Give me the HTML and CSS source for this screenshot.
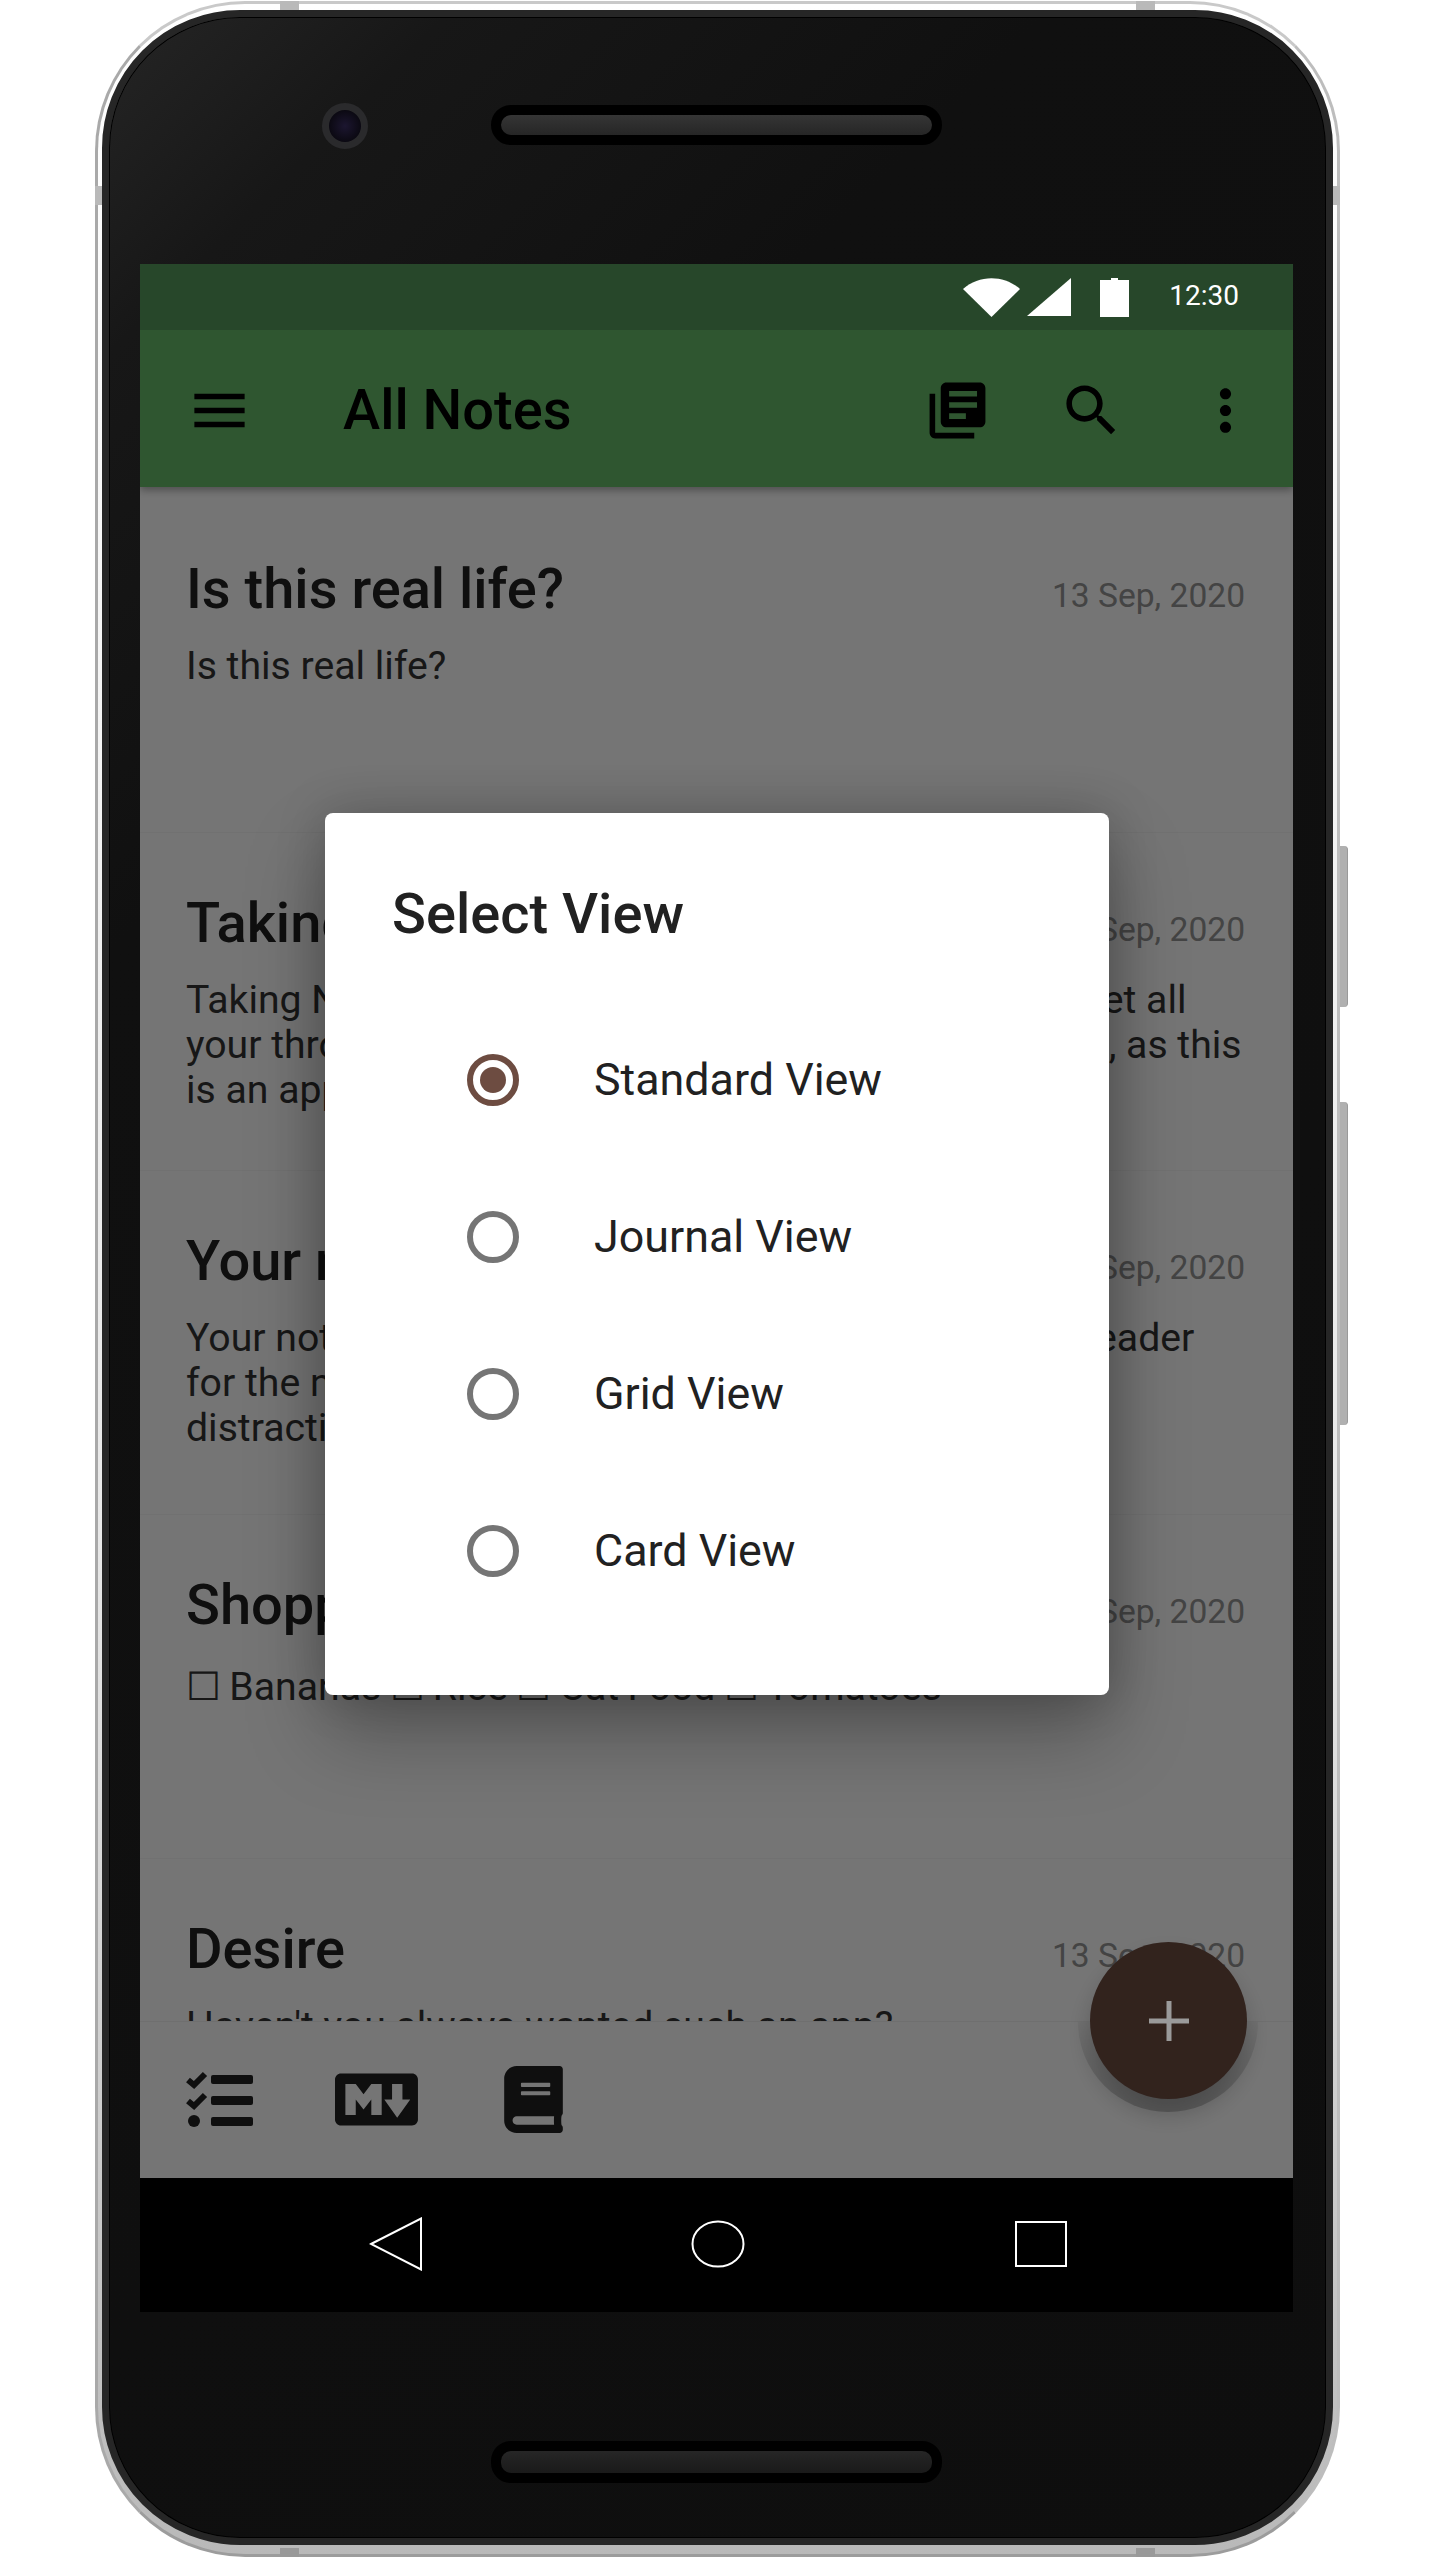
FILE: index.html
```html
<!DOCTYPE html>
<html lang="en">
<head>
    <meta charset="UTF-8">
    <meta name="viewport" content="width=device-width, initial-scale=1.0">
    <title>All Notes</title>
    <link rel="stylesheet" href="styles.css">
</head>
<body>
    <div class="phone">
        <span class="band band-top-left"></span>
        <span class="band band-top-right"></span>
        <span class="band band-side-left"></span>
        <span class="band band-side-right"></span>
        <span class="band band-bottom-left"></span>
        <span class="band band-bottom-right"></span>
        <span class="side-key key-power"></span>
        <span class="side-key key-volume"></span>

        <div class="face">
            <div class="bezel bezel-top">
                <span class="camera"></span>
                <span class="speaker"></span>
            </div>

            <div class="screen">
                <div class="app">
                    <!-- sits above the scrim, the system bar is not dimmed -->
                    <div class="status-bar">
                        <svg class="wifi" viewBox="0 0 57 39"><path d="M0 11C16 -3.500 41 -3.500 57 11L28.500 39Z" /></svg>
                        <svg class="signal" viewBox="0 0 44 38"><path d="M44 0V38H0Z" /></svg>
                        <svg class="battery" viewBox="0 0 29 39"><path d="M7 2H11V0H18V2H22H29V39H0V2Z" /></svg>
                        <span class="clock">12:30</span>
                    </div>

                    <div class="app-bar">
                        <svg class="icon" viewBox="0 0 24 24"><path d="M3 18h18v-2H3v2zm0-5h18v-2H3v2zm0-7v2h18V6H3z" /></svg>
                        <h1 class="app-title">All Notes</h1>
                        <svg class="icon" viewBox="0 0 24 24"><path d="M4 6H2v14c0 1.100.9 2 2 2h14v-2H4V6zm16-4H8c-1.100 0-2 .9-2 2v12c0 1.100.9 2 2 2h12c1.100 0 2-.9 2-2V4c0-1.100-.9-2-2-2zm-1 9H9V9h10v2zm-4 4H9v-2h6v2zm4-8H9V5h10v2z" /></svg>
                        <svg class="icon" viewBox="0 0 24 24"><path d="M15.500 14h-.79l-.28-.27C15.410 12.590 16 11.110 16 9.500 16 5.910 13.090 3 9.500 3S3 5.910 3 9.500 5.910 16 9.500 16c1.610 0 3.090-.59 4.230-1.570l.27.28v.79l5 4.990L20.490 19l-4.990-5zm-6 0C7.010 14 5 11.990 5 9.500S7.010 5 9.500 5 14 7.010 14 9.500 11.990 14 9.500 14z" /></svg>
                        <svg class="icon" viewBox="0 0 24 24"><path d="M12 8c1.100 0 2-.9 2-2s-.9-2-2-2-2 .9-2 2 .9 2 2 2zm0 2c-1.100 0-2 .9-2 2s.9 2 2 2 2-.9 2-2-.9-2-2-2zm0 6c-1.100 0-2 .9-2 2s.9 2 2 2 2-.9 2-2-.9-2-2-2z" /></svg>
                    </div>

                    <div class="notes">
                        <div class="note note-first">
                            <div class="note-head">
                                <h2 class="note-title">Is this real life?</h2>
                                <span class="note-date">13 Sep, 2020</span>
                            </div>
                            <p class="note-body">Is this real life?</p>
                        </div>
                        <div class="note note-second">
                            <div class="note-head">
                                <h2 class="note-title">Taking Notes</h2>
                                <span class="note-date">13 Sep, 2020</span>
                            </div>
                            <p class="note-body">Taking Notes is a pretty simple thing to do, you just get all<br>your thrown thoughts down right here in this nice app, as this<br>is an app built for that.</p>
                        </div>
                        <div class="note">
                            <div class="note-head">
                                <h2 class="note-title">Your notes</h2>
                                <span class="note-date">13 Sep, 2020</span>
                            </div>
                            <p class="note-body">Your notes are always with you here in the simplest reader<br>for the notes you take, without any<br>distractions.</p>
                        </div>
                        <div class="note">
                            <div class="note-head">
                                <h2 class="note-title">Shopping List</h2>
                                <span class="note-date">13 Sep, 2020</span>
                            </div>
                            <p class="note-body note-body-checks">☐ Bananas ☐ Rice ☐ Cat Food ☐ Tomatoes</p>
                        </div>
                        <div class="note">
                            <div class="note-head">
                                <h2 class="note-title">Desire</h2>
                                <span class="note-date">13 Sep, 2020</span>
                            </div>
                            <p class="note-body">Haven't you always wanted such an app?</p>
                        </div>
                    </div>

                    <div class="bottom-bar">
                        <svg class="tool-checks" viewBox="0 0 67 57">
                            <path class="check" d="M2 9L8 14L19 3M2 30L8 35L19 24" />
                            <circle cx="8" cy="50" r="6" />
                            <rect x="25" y="4" width="42" height="9" rx="2" />
                            <rect x="25" y="25" width="42" height="9" rx="2" />
                            <rect x="25" y="46" width="42" height="9" rx="2" />
                        </svg>
                        <svg class="tool-markdown" viewBox="0 3 16 10"><path d="M14.850 3H1.150C.52 3 0 3.520 0 4.150v7.690C0 12.480.52 13 1.150 13h13.690c.64 0 1.150-.52 1.150-1.150v-7.700C16 3.520 15.480 3 14.850 3zM9 11H7V8L5.500 9.920 4 8v3H2V5h2l1.500 2L7 5h2v6zm2.990.5L9.500 8H11V5h2v3h1.500l-2.510 3.500z" /></svg>
                        <svg class="tool-book" viewBox="0 0 448 512"><path d="M448 360V24c0-13.300-10.700-24-24-24H96C43 0 0 43 0 96v320c0 53 43 96 96 96h328c13.300 0 24-10.700 24-24v-16c0-7.500-3.500-14.300-8.900-18.700-4.200-15.400-4.200-59.300 0-74.700 5.400-4.300 8.900-11.100 8.900-18.600zM128 134c0-3.300 2.700-6 6-6h212c3.300 0 6 2.700 6 6v20c0 3.300-2.700 6-6 6H134c-3.300 0-6-2.700-6-6v-20zm0 64c0-3.300 2.700-6 6-6h212c3.300 0 6 2.700 6 6v20c0 3.300-2.700 6-6 6H134c-3.300 0-6-2.700-6-6v-20zm253.400 250H96c-17.700 0-32-14.300-32-32 0-17.600 14.400-32 32-32h285.400c-1.900 17.100-1.900 46.900 0 64z" /></svg>
                    </div>

                    <button class="fab"><svg viewBox="0 0 40 40"><path d="M17.500 0H22.500V17.500H40V22.500H22.500V40H17.500V22.500H0V17.500H17.500Z" /></svg></button>

                    <div class="scrim"></div>

                    <div class="dialog">
                        <h2 class="dialog-title">Select View</h2>
                        <div class="radio-row"><span class="radio radio-on"></span><span class="radio-label">Standard View</span></div>
                        <div class="radio-row"><span class="radio"></span><span class="radio-label">Journal View</span></div>
                        <div class="radio-row"><span class="radio"></span><span class="radio-label">Grid View</span></div>
                        <div class="radio-row"><span class="radio"></span><span class="radio-label">Card View</span></div>
                    </div>
                </div>

                <div class="nav-bar">
                    <svg class="nav-back" viewBox="0 0 54 54"><path d="M2 27L52 1.500V52.500Z" /></svg>
                    <svg class="nav-home" viewBox="0 0 54 48"><ellipse cx="27" cy="24" rx="25.500" ry="22.500" /></svg>
                    <svg class="nav-recent" viewBox="0 0 52 46"><rect x="1" y="1" width="50" height="44" /></svg>
                </div>
            </div>

            <div class="bezel bezel-bottom">
                <span class="speaker speaker-low"></span>
            </div>
        </div>
    </div>
</body>
</html>
```

FILE: styles.css
```css
* {
    box-sizing: border-box;
}
html, body {
    margin: 0;
    background-color: #fff;
}
body {
    width: 1440px;
    height: 2560px;
    padding: 1px 0 0 95px;
    font-family: Roboto, "Liberation Sans", sans-serif;
    overflow: hidden;
}
h1, h2, p {
    margin: 0;
}

/* Device frame */
.phone {
    position: relative;
    width: 1245px;
    height: 2556px;
    padding: 6px 4px 9px 4px;
    border: 3px solid #c9c9c9;
    border-bottom-color: #9c9c9c;
    border-left-color: #a9a9a9;
    border-right-color: #bdbdbd;
    border-radius: 150px;
    background: linear-gradient(180deg, #fff 0%, #e8e8e8 60%, #b9b9b9 100%);
}
.band {
    position: absolute;
    background-color: #b9b9b9;
}
.band-top-left, .band-bottom-left {
    left: 182px;
    width: 19px;
    height: 9px;
}
.band-top-right, .band-bottom-right {
    right: 182px;
    width: 19px;
    height: 9px;
}
.band-top-left, .band-top-right {
    top: -3px;
}
.band-bottom-left, .band-bottom-right {
    bottom: -3px;
    background-color: #999;
}
.band-side-left, .band-side-right {
    top: 182px;
    width: 7px;
    height: 19px;
}
.band-side-left {
    left: -3px;
}
.band-side-right {
    right: -3px;
}
.side-key {
    position: absolute;
    right: -11px;
    width: 8px;
    background-color: #b0b0b0;
    border-radius: 0 4px 4px 0;
    border-right: 1px solid #9a9a9a;
}
.key-power {
    top: 842px;
    height: 161px;
}
.key-volume {
    top: 1098px;
    height: 323px;
}
.face {
    height: 100%;
    padding: 0 33px 0 31px;
    display: flex;
    flex-direction: column;
    border: 7px solid #262626;
    border-radius: 138px;
    background: linear-gradient(135deg, #252525 0%, #171717 9%, #101010 25%, #0e0e0e 100%);
    box-shadow: inset 0 0 0 1px #000;
}
.bezel {
    display: flex;
    justify-content: center;
    align-items: center;
}
.bezel-top {
    position: relative;
    height: 247px;
    padding-bottom: 32px;
}
.bezel-bottom {
    flex: 1;
    padding-top: 73px;
}
.camera {
    position: absolute;
    left: 182px;
    top: 86px;
    width: 46px;
    height: 46px;
    border: 7px solid #2a2a2c;
    border-radius: 50%;
    background: radial-gradient(circle, #1c1630 0%, #0b0912 70%);
}
.speaker {
    width: 451px;
    height: 40px;
    border: 10px solid #000;
    border-radius: 20px;
    background: linear-gradient(180deg, #353535 0%, #262626 100%);
}
.speaker-low {
    height: 42px;
    background: linear-gradient(180deg, #262626 0%, #1a1a1a 100%);
}

/* Screen */
.screen {
    width: 1153px;
    height: 2048px;
    flex: none;
    display: flex;
    flex-direction: column;
}
.app {
    position: relative;
    flex: 1;
    display: flex;
    flex-direction: column;
    overflow: hidden;
    background-color: #fff;
}
.status-bar {
    position: relative;
    z-index: 3;
    height: 66px;
    flex: none;
    display: flex;
    align-items: center;
    justify-content: flex-end;
    padding: 0 54px 0 0;
    background-color: #27472a;
    fill: #fff;
    color: #fff;
}
.wifi {
    width: 57px;
    height: 39px;
    margin-right: 7px;
}
.signal {
    width: 44px;
    height: 38px;
    margin-right: 29px;
}
.battery {
    width: 29px;
    height: 39px;
    margin-right: 40px;
}
.clock {
    font-size: 28px;
    line-height: 32px;
    margin-top: -2px;
}
.app-bar {
    height: 157px;
    flex: none;
    display: flex;
    align-items: center;
    padding: 3px 0 0 46px;
    background-color: #66bb6a;
    box-shadow: 0 3px 8px rgba(0, 0, 0, .35);
    position: relative;
}
.icon {
    width: 67px;
    height: 67px;
    flex: none;
    margin-right: 67px;
}
.app-title {
    flex: 1;
    margin-left: 90px;
    font-size: 56px;
    font-weight: 500;
    color: #000;
    white-space: nowrap;
}
.app-bar .icon:first-child {
    margin-right: 0;
}
.app-bar .icon:last-child {
    margin-right: 34px;
}

/* Notes list */
.notes {
    flex: 1;
    min-height: 0;
    overflow: hidden;
    padding-top: 12px;
}
.note {
    height: 344px;
    padding: 56px 48px 0 46px;
    border-bottom: 1px solid #f7f7f7;
}
.note-first {
    height: 334px;
}
.note-second {
    height: 338px;
}
.note-head {
    display: flex;
    justify-content: space-between;
    align-items: center;
    height: 68px;
}
.note-title {
    font-size: 56px;
    font-weight: 500;
    color: #212121;
    white-space: nowrap;
}
.note-date {
    font-size: 33.600px;
    color: #949494;
    padding-top: 12px;
}
.note-body {
    margin-top: 21px;
    font-size: 39.200px;
    line-height: 45px;
    color: #333;
    white-space: nowrap;
}
.note-body-checks {
    margin-top: 26px;
    word-spacing: -1.400px;
}
.bottom-bar {
    position: relative;
    height: 157px;
    flex: none;
    display: flex;
    align-items: center;
    padding: 0 0 0 46px;
    overflow: hidden;
    background-color: #fff;
    border-top: 1px solid #f2f2f2;
    fill: #212121;
}
/* cradle under the round button, only its lower half falls inside the bar */
.bottom-bar::after {
    content: "";
    position: absolute;
    left: 938px;
    top: -90px;
    width: 180px;
    height: 180px;
    border-radius: 50%;
    background: linear-gradient(180deg, rgba(0, 0, 0, .04) 50%, rgba(0, 0, 0, .22) 100%);
}
.tool-checks {
    width: 67px;
    height: 57px;
    margin: -2px 82px 0 0;
}
.check {
    fill: none;
    stroke: #212121;
    stroke-width: 6;
}
.tool-markdown {
    width: 83px;
    height: 53px;
    margin: -2px 86px 0 0;
}
.tool-book {
    width: 59px;
    height: 67px;
    margin-top: -2px;
}
.fab {
    position: absolute;
    left: 950px;
    top: 1678px;
    width: 157px;
    height: 157px;
    padding: 0;
    border: none;
    border-radius: 50%;
    display: flex;
    align-items: center;
    justify-content: center;
    background-color: #6d4c41;
    box-shadow: 0 14px 24px rgba(0, 0, 0, .22);
}
/* plus reads lighter than the scrim would leave it */
.fab svg {
    position: relative;
    z-index: 2;
    width: 40px;
    height: 40px;
    fill: #9a9a9a;
}

/* Dialog */
.scrim {
    position: absolute;
    inset: 0;
    z-index: 1;
    background-color: rgba(0, 0, 0, .54);
}
.dialog {
    position: absolute;
    z-index: 2;
    left: 185px;
    top: 549px;
    width: 784px;
    height: 882px;
    padding: 68px 0 0 67px;
    background-color: #fff;
    border-radius: 8px;
    box-shadow: 0 40px 80px rgba(0, 0, 0, .28), 0 0 50px rgba(0, 0, 0, .2);
}
.dialog-title {
    font-size: 56px;
    font-weight: 500;
    line-height: 66px;
    color: #212121;
    margin-bottom: 54px;
}
.radio-row {
    height: 157px;
    display: flex;
    align-items: center;
    padding-left: 75px;
}
.radio {
    width: 52px;
    height: 52px;
    border: 6px solid #757575;
    border-radius: 50%;
    margin-right: 75px;
    flex: none;
    position: relative;
}
.radio-on {
    border-color: #6d4c41;
}
.radio-on::after {
    content: "";
    position: absolute;
    inset: 7px;
    border-radius: 50%;
    background-color: #6d4c41;
}
.radio-label {
    font-size: 44.800px;
    color: #212121;
}

/* System navigation */
.nav-bar {
    height: 134px;
    flex: none;
    display: flex;
    align-items: center;
    padding: 0 0 2px 229px;
    background-color: #000;
    fill: none;
    stroke: #fff;
    stroke-width: 2;
}
.nav-back {
    width: 54px;
    height: 54px;
    margin-right: 268px;
}
.nav-home {
    width: 54px;
    height: 48px;
    margin-right: 270px;
}
.nav-recent {
    width: 52px;
    height: 46px;
}
```
